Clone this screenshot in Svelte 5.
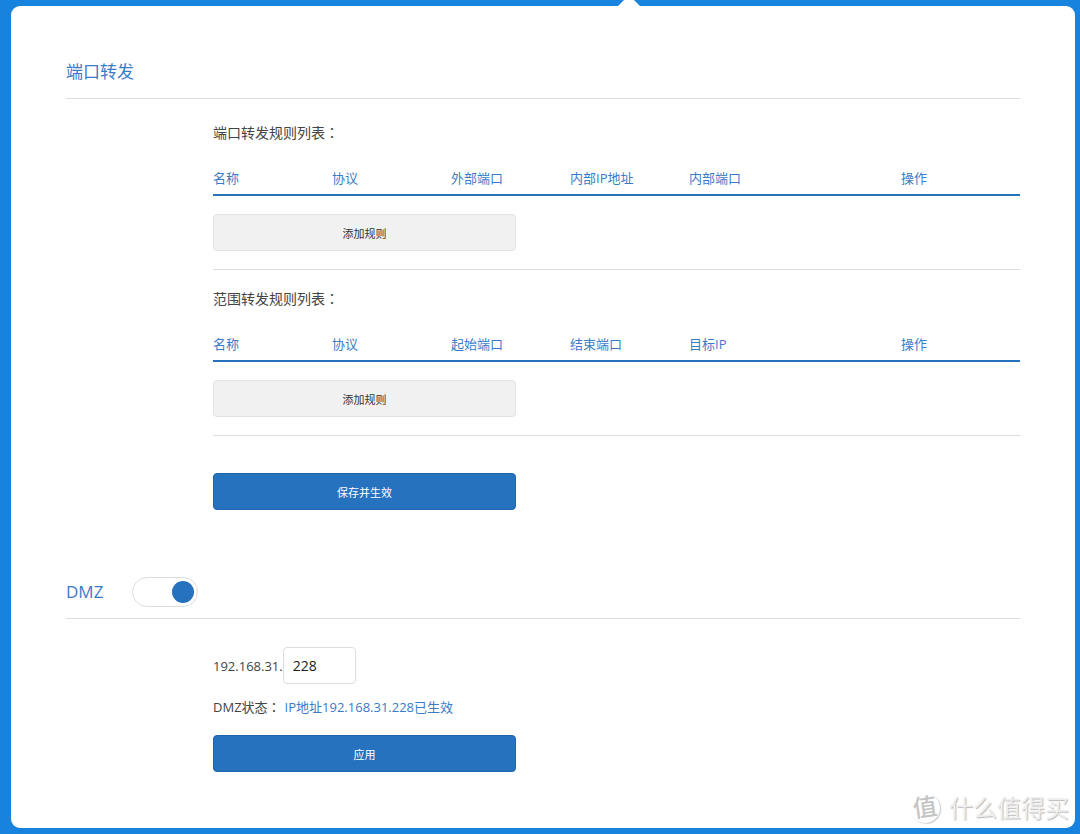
<script>
	const tables = [
		{
			title: '端口转发规则列表',
			columns: ['名称', '协议', '外部端口', '内部IP地址', '内部端口', '操作']
		},
		{
			title: '范围转发规则列表',
			columns: ['名称', '协议', '起始端口', '结束端口', '目标IP', '操作']
		}
	];

	let rules = $state([[], []]);
	let dmzEnabled = $state(true);
	let host = $state('228');
	let appliedHost = $state('228');

	function addRule(index) {
		rules[index].push({ values: ['', '', '', '', ''] });
	}

	function removeRule(index, row) {
		rules[index].splice(row, 1);
	}

	function applyDmz(e) {
		e.preventDefault();
		appliedHost = host;
	}
</script>

<div class="page">
	<main class="card">
		<span class="pointer"></span>

		<section>
			<header>
				<h2>端口转发</h2>
			</header>

			<div class="content">
				{#each tables as table, i}
					<div class="rules">
						<h3 id="rules-{i}">{table.title}<span class="colon">：</span></h3>
						<table aria-labelledby="rules-{i}">
							<thead>
								<tr>
									{#each table.columns as column}
										<th scope="col">{column}</th>
									{/each}
								</tr>
							</thead>
							<tbody>
								{#each rules[i] as rule, row}
									<tr>
										{#each rule.values as value, n}
											<td><input class="cell" aria-label={table.columns[n]} bind:value={rule.values[n]} /></td>
										{/each}
										<td><button class="remove" onclick={() => removeRule(i, row)}>删除</button></td>
									</tr>
								{/each}
							</tbody>
						</table>
						<button class="btn" onclick={() => addRule(i)}>添加规则</button>
					</div>
				{/each}

				<button class="btn primary save">保存并生效</button>
			</div>
		</section>

		<section class="dmz">
			<header>
				<h2><label for="dmz-switch">DMZ</label></h2>
				<input id="dmz-switch" class="switch" type="checkbox" role="switch" bind:checked={dmzEnabled} />
			</header>

			{#if dmzEnabled}
				<form class="content" onsubmit={applyDmz}>
					<div class="address">
						<label for="dmz-host">192.168.31.</label>
						<input id="dmz-host" type="text" bind:value={host} />
					</div>
					<p class="status">
						<span>DMZ状态<span class="colon">：</span></span>
						<span class="value">IP地址192.168.31.{appliedHost}已生效</span>
					</p>
					<button class="btn primary" type="submit">应用</button>
				</form>
			{/if}
		</section>
	</main>

	<div class="watermark">
		<span class="badge">值</span>
		<span>什么值得买</span>
	</div>
</div>

<style>
	:global(body) {
		background: #1882df;
	}

	.page {
		position: relative;
		box-sizing: border-box;
		min-height: 100vh;
		display: flex;
		padding: 6px 5px 6px 11px;
		font-family: 'Open Sans', 'Noto Sans CJK SC', sans-serif;
		font-size: 13px;
		line-height: 20px;
		color: #444;
	}

	.card {
		position: relative;
		box-sizing: border-box;
		flex: 1;
		padding: 51px 55px 54px;
		background: #fff;
		border-radius: 9px;
	}

	.pointer {
		position: absolute;
		top: -11px;
		left: calc(58% - 10px);
		border: 11px solid transparent;
		border-top: 0;
		border-bottom-color: #fff;
	}

	header {
		display: flex;
		align-items: center;
		gap: 29px;
		height: 29px;
		padding-bottom: 12px;
		border-bottom: 1px solid #ddd;
	}

	h2,
	h3,
	p {
		margin: 0;
		font-weight: 400;
	}

	h2 {
		font-size: 17px;
		color: #3a7bc8;
	}

	.content {
		padding-left: 147px;
	}

	.rules {
		padding: 24px 0 18px;
		border-bottom: 1px solid #ddd;
	}

	.rules + .rules {
		padding-top: 19px;
	}

	h3 {
		font-size: 14px;
	}

	/* the TC face centres the full-width colon */
	.colon {
		font-family: 'Noto Sans CJK TC', sans-serif;
		line-height: 1;
	}

	table {
		width: 100%;
		margin: 14px 0 18px;
		border-collapse: collapse;
		table-layout: fixed;
	}

	th {
		width: 119px;
		padding: 11px 0 6px;
		border-bottom: 2px solid #2672bf;
		font-weight: 400;
		text-align: left;
		color: #3a7bc8;
	}

	th:last-child {
		width: auto;
		text-align: center;
	}

	td {
		padding: 6px 0;
	}

	td:last-child {
		text-align: center;
	}

	.cell {
		width: 80%;
		box-sizing: border-box;
	}

	.remove {
		border: 0;
		background: none;
		color: #3a7bc8;
		cursor: pointer;
	}

	.btn {
		display: block;
		box-sizing: border-box;
		width: 38%;
		max-width: 303px;
		height: 37px;
		padding: 0;
		border: 1px solid #e3e3e3;
		border-radius: 4px;
		background: #f1f1f1;
		font-family: inherit;
		font-size: 11px;
		color: #333;
		cursor: pointer;
	}

	.btn.primary {
		border-color: #1f64ab;
		background: #2672bf;
		color: #fff;
	}

	.save {
		margin-top: 37px;
	}

	.dmz {
		margin-top: 67px;
	}

	.switch {
		appearance: none;
		box-sizing: border-box;
		display: flex;
		align-items: center;
		width: 66px;
		height: 30px;
		margin: 0;
		padding: 0 3px;
		border: 1px solid #ddd;
		border-radius: 15px;
		background: #fff;
		cursor: pointer;
	}

	.switch::before {
		content: '';
		width: 22px;
		height: 22px;
		border-radius: 50%;
		background: #bbb;
	}

	.switch:checked::before {
		margin-left: auto;
		background: #2672bf;
	}

	.address {
		display: flex;
		align-items: center;
		padding-top: 28px;
	}

	.address input {
		box-sizing: border-box;
		width: 73px;
		height: 37px;
		padding: 0 9px;
		border: 1px solid #ddd;
		border-radius: 4px;
		font-family: inherit;
		font-size: 14px;
		color: #222;
	}

	.status {
		display: flex;
		gap: 4px;
		margin: 13px 0 18px;
	}

	.value {
		color: #3a7bc8;
	}

	.watermark {
		position: absolute;
		right: 11px;
		bottom: 10px;
		display: flex;
		align-items: center;
		gap: 9px;
		font-size: 24px;
		line-height: 32px;
		color: #eee;
		text-shadow: 1px 1px 1px #bbb;
		pointer-events: none;
	}

	.badge {
		width: 30px;
		height: 30px;
		border-radius: 50%;
		box-shadow: 1px 1px 1px #ccc;
		font-size: 24px;
		font-weight: 500;
		line-height: 28px;
		text-align: center;
		text-shadow: none;
		color: #c4c4c4;
		transform: rotate(-8deg);
	}
</style>
